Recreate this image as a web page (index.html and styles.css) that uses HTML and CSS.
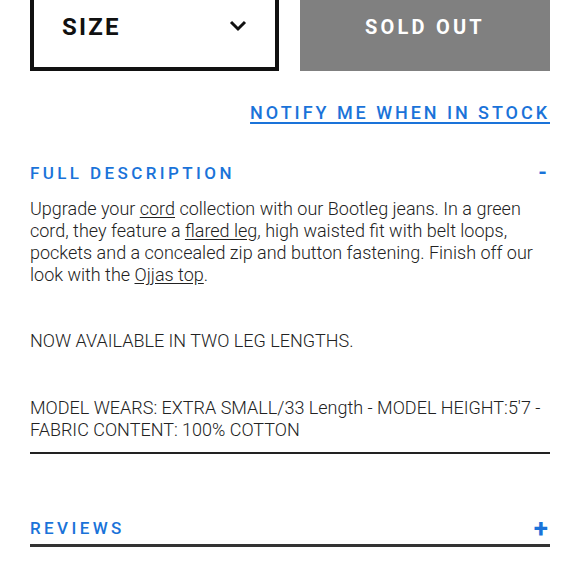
FILE: index.html
```html
<!DOCTYPE html>
<html>
<head>
<meta charset="utf-8">
<link rel="stylesheet" href="styles.css">
</head>
<body>
<div class="page">
  <div class="buy-row">
    <div class="size-select">
      <span class="size-label">SIZE</span>
      <svg class="chev" width="18" height="12" viewBox="0 0 18 12"><path d="M2 2 L9 9 L16 2" fill="none" stroke="#111" stroke-width="3"/></svg>
    </div>
    <div class="sold-out">SOLD OUT</div>
  </div>
  <div class="notify-row"><a class="notify" href="#">NOTIFY ME WHEN IN STOCK</a></div>

  <div class="section open">
    <div class="section-head"><span class="section-title">FULL DESCRIPTION</span><span class="toggle minus">-</span></div>
    <div class="section-body">
      <p class="para">Upgrade your <a href="#">cord</a> collection with our Bootleg jeans. In a green cord, they feature a <a href="#">flared leg</a>, high waisted fit with belt loops, pockets and a concealed zip and button fastening. Finish off our look with the <a href="#">Ojjas top</a>.</p>
      <p class="para p2">NOW AVAILABLE IN TWO LEG LENGTHS.</p>
      <p class="para p3">MODEL WEARS: EXTRA SMALL/33 Length - MODEL HEIGHT:5'7 - FABRIC CONTENT: 100% COTTON</p>
    </div>
  </div>

  <div class="section reviews">
    <div class="section-head"><span class="section-title">REVIEWS</span><span class="toggle plus">+</span></div>
  </div>
</div>
</body>
</html>
```

FILE: styles.css
```css
html, body {
  margin: 0;
  padding: 0;
  background: #fff;
}
body {
  font-family: Roboto, "Liberation Sans", sans-serif;
  color: #222;
}
.page {
  padding: 0 30px;
}
.buy-row {
  display: flex;
  gap: 21px;
  margin-top: -10px;
  height: 81px;
}
.size-select {
  box-sizing: border-box;
  width: 249px;
  border: 4px solid #111;
  display: flex;
  align-items: center;
  justify-content: space-between;
  padding: 0 28px 7px 28px;
}
.size-label {
  font-size: 24px;
  font-weight: 700;
  letter-spacing: 2.2px;
  color: #111;
}
.chev {
  display: block;
  margin-top: -2px;
}
.sold-out {
  flex: 1;
  background: #808080;
  color: #fff;
  display: flex;
  align-items: center;
  justify-content: center;
  padding-bottom: 7px;
  font-size: 20px;
  font-weight: 700;
  letter-spacing: 3.2px;
}
.notify-row {
  display: flex;
  justify-content: flex-end;
  margin-top: 31px;
}
.notify {
  color: #1a73d9;
  font-size: 18px;
  font-weight: 500;
  letter-spacing: 2.95px;
  text-decoration: underline;
  text-underline-offset: 3px;
  text-decoration-thickness: 2px;
}
.section-head {
  display: flex;
  justify-content: space-between;
  align-items: center;
}
.section-title {
  color: #1a73d9;
  font-size: 17px;
  font-weight: 500;
  letter-spacing: 3.4px;
}
.toggle {
  color: #1a73d9;
  font-weight: 700;
  font-size: 22px;
  line-height: 1;
}
.open .section-head {
  margin-top: 39px;
}
.open .minus {
  margin-right: 3px;
}
.section-body {
  border-bottom: 2px solid #222;
  padding-bottom: 11px;
}
.para {
  margin: 0;
  font-size: 18px;
  font-weight: 300;
  line-height: 22px;
  color: #222;
}
.para:first-child {
  margin-top: 14px;
}
.para a {
  color: #222;
  text-decoration: underline;
  text-underline-offset: 2px;
}
.p2 {
  margin-top: 44px;
}
.p3 {
  margin-top: 45px;
}
.reviews {
  border-bottom: 3px solid #333;
  margin-top: 61px;
  padding-bottom: 3px;
}
.reviews .toggle {
  font-size: 26px;
  margin-right: 2px;
}
```
